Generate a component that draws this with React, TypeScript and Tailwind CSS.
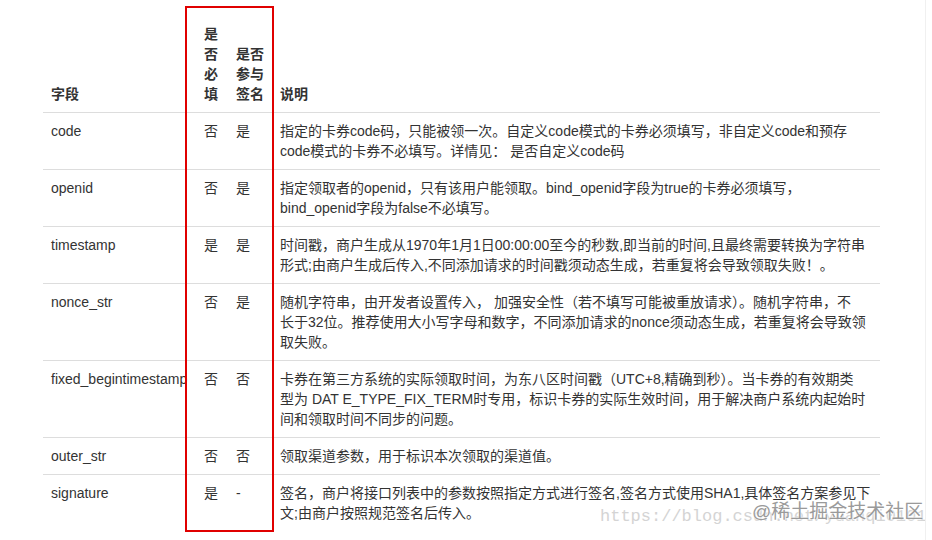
import React from 'react';

type Row = {
  field: string;
  required: string;
  signed: string;
  desc: string[];
};

const rows: Row[] = [
  {
    field: 'code',
    required: '否',
    signed: '是',
    desc: [
      '指定的卡券code码，只能被领一次。自定义code模式的卡券必须填写，非自定义code和预存',
      'code模式的卡券不必填写。详情见： 是否自定义code码',
    ],
  },
  {
    field: 'openid',
    required: '否',
    signed: '是',
    desc: [
      '指定领取者的openid，只有该用户能领取。bind_openid字段为true的卡券必须填写，',
      'bind_openid字段为false不必填写。',
    ],
  },
  {
    field: 'timestamp',
    required: '是',
    signed: '是',
    desc: [
      '时间戳，商户生成从1970年1月1日00:00:00至今的秒数,即当前的时间,且最终需要转换为字符串',
      '形式;由商户生成后传入,不同添加请求的时间戳须动态生成，若重复将会导致领取失败！。',
    ],
  },
  {
    field: 'nonce_str',
    required: '否',
    signed: '是',
    desc: [
      '随机字符串，由开发者设置传入， 加强安全性（若不填写可能被重放请求）。随机字符串，不',
      '长于32位。推荐使用大小写字母和数字，不同添加请求的nonce须动态生成，若重复将会导致领',
      '取失败。',
    ],
  },
  {
    field: 'fixed_begintimestamp',
    required: '否',
    signed: '否',
    desc: [
      '卡券在第三方系统的实际领取时间，为东八区时间戳（UTC+8,精确到秒）。当卡券的有效期类',
      '型为 DAT E_TYPE_FIX_TERM时专用，标识卡券的实际生效时间，用于解决商户系统内起始时',
      '间和领取时间不同步的问题。',
    ],
  },
  {
    field: 'outer_str',
    required: '否',
    signed: '否',
    desc: ['领取渠道参数，用于标识本次领取的渠道值。'],
  },
  {
    field: 'signature',
    required: '是',
    signed: '-',
    desc: [
      '签名，商户将接口列表中的参数按照指定方式进行签名,签名方式使用SHA1,具体签名方案参见下',
      '文;由商户按照规范签名后传入。',
    ],
  },
];

const font = {
  fontFamily: '"Liberation Sans", "Noto Sans CJK SC", sans-serif',
};

export default function App() {
  return (
    <div
      className="relative w-[926px] h-[540px] overflow-hidden bg-white border-r border-[#f0f0f0] text-[#333] text-[14px] leading-[20px]"
      style={font}
    >
      <div className="pl-[43px] pt-[16px]">
        <table className="table-fixed w-[837px] border-collapse">
          <thead>
            <tr className="border-b border-[#dddddd]">
              <th className="w-[153px] p-2 text-left align-bottom font-bold">字段</th>
              <th className="w-[32px] p-2 text-left align-bottom font-bold">是否必填</th>
              <th className="w-[44px] p-2 text-left align-bottom font-bold">是否参与签名</th>
              <th className="p-2 text-left align-bottom font-bold">说明</th>
            </tr>
          </thead>
          <tbody>
            {rows.map((r, i) => (
              <tr key={r.field} className={i < rows.length - 1 ? 'border-b border-[#dddddd]' : ''}>
                <td className="p-2 align-top whitespace-nowrap">{r.field}</td>
                <td className="p-2 align-top">{r.required}</td>
                <td className="p-2 align-top">{r.signed}</td>
                <td className="p-2 align-top">
                  {r.desc.map((line, j) => (
                    <div key={j} className="whitespace-nowrap">
                      {line}
                    </div>
                  ))}
                </td>
              </tr>
            ))}
          </tbody>
        </table>
      </div>

      {/* red annotation box */}
      <div className="absolute left-[185px] top-[6px] w-[89px] h-[526px] border-2 border-[#e00000] pointer-events-none" />

      {/* watermarks */}
      <div
        className="absolute left-[600px] top-[505px] text-[17px] leading-[24px] text-[#d4d4d4] whitespace-nowrap"
        style={{ fontFamily: '"Liberation Mono", monospace' }}
      >
        https://blog.csdn.net/yuanqi0101
      </div>
      <div
        className="absolute left-[752px] top-[500px] text-[19px] leading-[24px] text-[#9a9a9a] whitespace-nowrap [text-shadow:0_0_2px_#fff,0_0_2px_#fff]"
        style={{ fontFamily: '"Liberation Sans", "Noto Sans CJK SC", sans-serif' }}
      >
        @稀土掘金技术社区
      </div>
    </div>
  );
}
